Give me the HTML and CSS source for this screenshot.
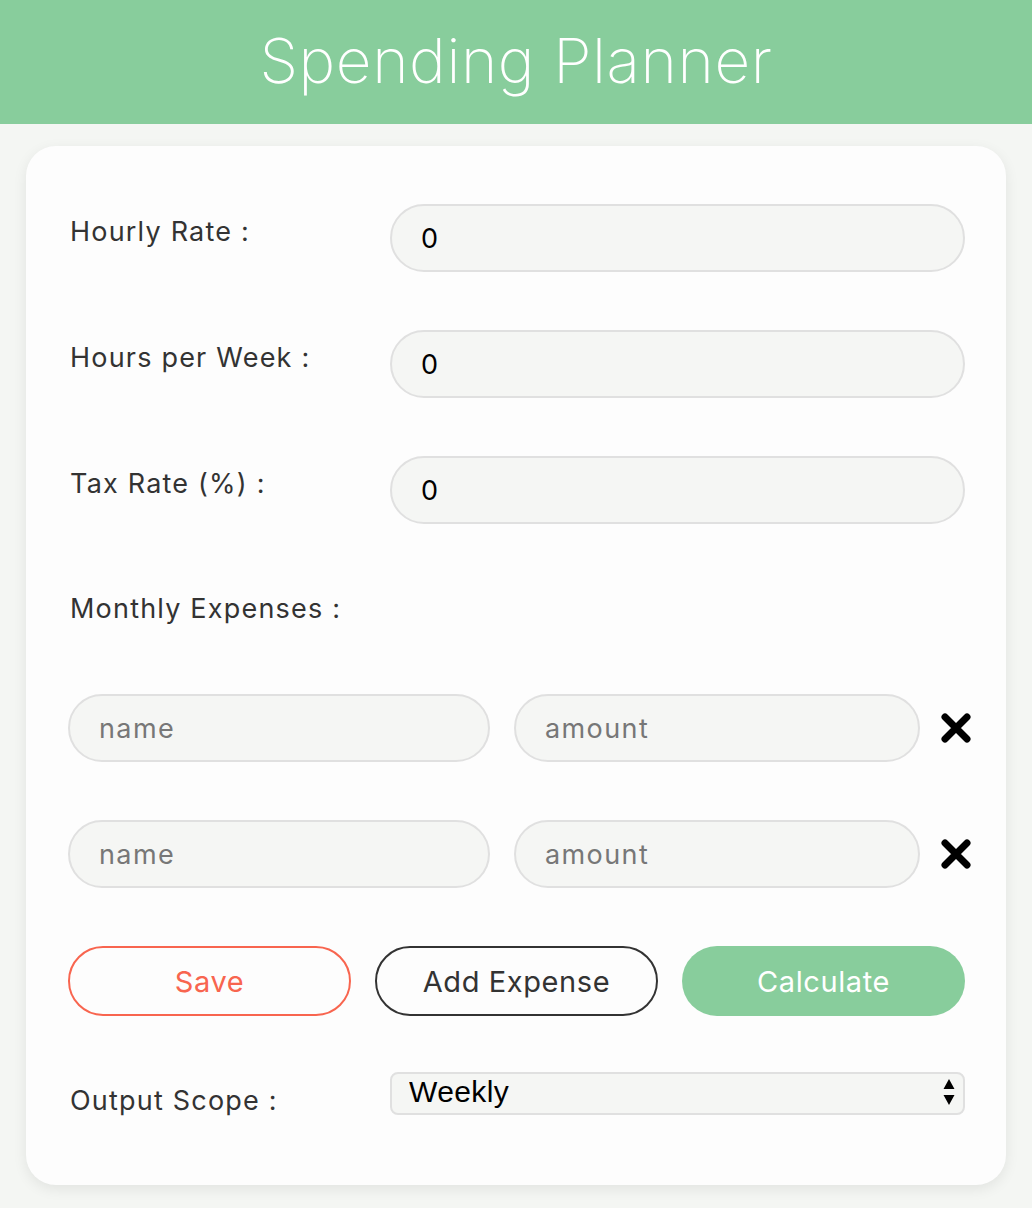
FILE: index.html
```html
<!DOCTYPE html>
<html lang="en">
<head>
  <meta charset="UTF-8" />
  <meta name="viewport" content="width=device-width, initial-scale=1.0"/>
  <title>Spending Planner</title>
  <link rel="stylesheet" href="styles.css">
</head>
<body>

<header class="top-bar">
  <h1>Spending Planner</h1>
</header>

<div class="card">

  <!-- Income fields -->
  <div class="field-row">
    <label for="hourlyRate">Hourly Rate :</label>
    <input type="text" id="hourlyRate" class="pill-input" value="0">
  </div>

  <div class="field-row">
    <label for="hoursPerWeek">Hours per Week :</label>
    <input type="text" id="hoursPerWeek" class="pill-input" value="0">
  </div>

  <div class="field-row">
    <label for="taxRate">Tax Rate (%) :</label>
    <input type="text" id="taxRate" class="pill-input" value="0">
  </div>

  <div class="section-label">Monthly Expenses :</div>

  <!-- Expense rows -->
  <div class="expense-row">
    <input type="text" class="pill-input" placeholder="name">
    <input type="text" class="pill-input" placeholder="amount">
    <button class="remove-btn" title="Remove">
      <svg width="32" height="32" viewBox="0 0 32 32"><path d="M5 5 L27 27 M27 5 L5 27" stroke="#000" stroke-width="7" stroke-linecap="round"/></svg>
    </button>
  </div>

  <div class="expense-row">
    <input type="text" class="pill-input" placeholder="name">
    <input type="text" class="pill-input" placeholder="amount">
    <button class="remove-btn" title="Remove">
      <svg width="32" height="32" viewBox="0 0 32 32"><path d="M5 5 L27 27 M27 5 L5 27" stroke="#000" stroke-width="7" stroke-linecap="round"/></svg>
    </button>
  </div>

  <!-- Action buttons -->
  <div class="button-row">
    <button class="btn save-btn">Save</button>
    <button class="btn add-btn">Add Expense</button>
    <button class="btn calc-btn">Calculate</button>
  </div>

  <div class="field-row scope-row">
    <label for="scope">Output Scope :</label>
    <div class="select-wrap">
      <select id="scope">
        <option>Weekly</option>
        <option>Monthly</option>
        <option>Yearly</option>
      </select>
      <svg class="select-arrows" width="12" height="34" viewBox="0 0 12 34"><path d="M6 3 L11.5 13 L0.5 13 Z M0.5 19 L11.5 19 L6 29 Z" fill="#000"/></svg>
    </div>
  </div>

</div>

</body>
</html>
```

FILE: styles.css
```css
body {
  font-family: Inter, "Open Sans", sans-serif;
  margin: 0;
  background-color: #f4f6f3;
  color: #333;
}

.top-bar {
  background-color: #88cd9c;
  height: 124px;
  display: flex;
  align-items: center;
  justify-content: center;
}

.top-bar h1 {
  margin: 0 0 4px;
  color: white;
  font-weight: 200;
  font-size: 62px;
  letter-spacing: 0.6px;
}

.card {
  background: #fdfdfd;
  margin: 22px 26px 24px;
  padding: 58px 41px 68px 42px;
  border-radius: 30px;
  box-shadow: 0 4px 14px rgba(0, 0, 0, 0.08);
  display: flex;
  flex-direction: column;
  gap: 58px;
}

.field-row {
  display: grid;
  grid-template-columns: 322px 1fr;
  align-items: center;
}

.field-row label,
.section-label {
  font-size: 27px;
  letter-spacing: 1.2px;
  color: #333;
  padding-left: 2px;
  margin-top: -14px;
}

.section-label {
  margin-top: 0;
  line-height: 54px;
}

.pill-input {
  box-sizing: border-box;
  width: 100%;
  height: 68px;
  padding: 0 29px;
  border: 2px solid #e0e0e0;
  border-radius: 34px;
  background: #f5f6f4;
  font-family: inherit;
  font-size: 27px;
  letter-spacing: 1.4px;
  color: #000;
  outline: none;
}

.pill-input::placeholder {
  color: #777;
}

.expense-row {
  display: grid;
  grid-template-columns: 422px 406px 1fr;
  gap: 24px;
  align-items: center;
}

.remove-btn {
  background: none;
  border: none;
  padding: 0;
  margin-left: -4px;
  width: 36px;
  height: 36px;
  display: flex;
  align-items: center;
  justify-content: flex-start;
  cursor: pointer;
}

.button-row {
  display: grid;
  grid-template-columns: 1fr 1fr 1fr;
  gap: 24px;
}

.btn {
  height: 70px;
  border-radius: 35px;
  font-family: inherit;
  font-size: 29px;
  letter-spacing: 0.6px;
  background: transparent;
  cursor: pointer;
}

.save-btn {
  border: 2px solid #f8654f;
  color: #f8654f;
}

.add-btn {
  border: 2px solid #333;
  color: #333;
}

.calc-btn {
  border: none;
  background-color: #88cd9c;
  color: white;
}

.scope-row {
  margin-top: -4px;
}

.scope-row label {
  margin-top: 14px;
}

.select-wrap {
  position: relative;
}

.select-wrap select {
  appearance: none;
  -webkit-appearance: none;
  box-sizing: border-box;
  width: 100%;
  height: 43px;
  padding: 0 17px 4px;
  border: 2px solid #e0e0e0;
  border-radius: 8px;
  background: #f5f6f4;
  font-family: "Liberation Sans", Arial, sans-serif;
  font-size: 30px;
  letter-spacing: 0.4px;
  color: #000;
}

.select-arrows {
  position: absolute;
  right: 10px;
  top: 4px;
  pointer-events: none;
}
```
